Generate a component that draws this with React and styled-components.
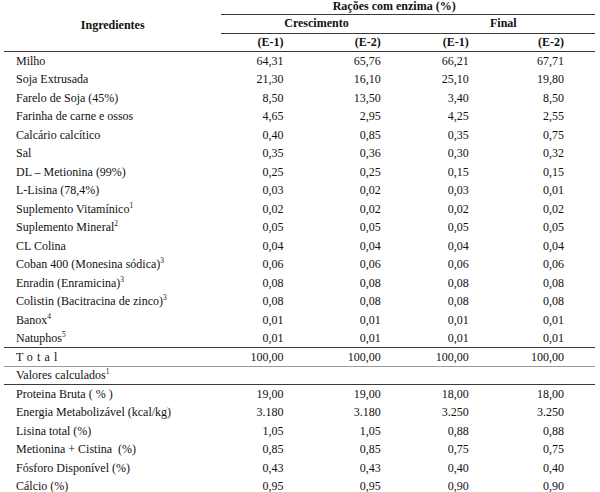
import React from 'react';
import styled, { createGlobalStyle } from 'styled-components';

const GlobalStyle = createGlobalStyle`
  html, body {
    margin: 0;
    padding: 0;
    background: #ffffff;
  }
  body {
    font-family: "Liberation Serif", "Times New Roman", serif;
    color: #111111;
    overflow: hidden;
  }
`;

const ingredients = [
  { name: 'Milho', values: ['64,31', '65,76', '66,21', '67,71'] },
  { name: 'Soja Extrusada', values: ['21,30', '16,10', '25,10', '19,80'] },
  { name: 'Farelo de Soja (45%)', values: ['8,50', '13,50', '3,40', '8,50'] },
  { name: 'Farinha de carne e ossos', values: ['4,65', '2,95', '4,25', '2,55'] },
  { name: 'Calcário calcítico', values: ['0,40', '0,85', '0,35', '0,75'] },
  { name: 'Sal', values: ['0,35', '0,36', '0,30', '0,32'] },
  { name: 'DL – Metionina (99%)', values: ['0,25', '0,25', '0,15', '0,15'] },
  { name: 'L-Lisina (78,4%)', values: ['0,03', '0,02', '0,03', '0,01'] },
  { name: 'Suplemento Vitamínico', note: '1', values: ['0,02', '0,02', '0,02', '0,02'] },
  { name: 'Suplemento Mineral', note: '2', values: ['0,05', '0,05', '0,05', '0,05'] },
  { name: 'CL Colina', values: ['0,04', '0,04', '0,04', '0,04'] },
  { name: 'Coban 400 (Monesina sódica)', note: '3', values: ['0,06', '0,06', '0,06', '0,06'] },
  { name: 'Enradin (Enramicina)', note: '3', values: ['0,08', '0,08', '0,08', '0,08'] },
  { name: 'Colistin (Bacitracina de zinco)', note: '3', values: ['0,08', '0,08', '0,08', '0,08'] },
  { name: 'Banox', note: '4', values: ['0,01', '0,01', '0,01', '0,01'] },
  { name: 'Natuphos', note: '5', values: ['0,01', '0,01', '0,01', '0,01'] },
];

const calculated = [
  { name: 'Proteina Bruta ( % )', values: ['19,00', '19,00', '18,00', '18,00'] },
  { name: 'Energia Metabolizável (kcal/kg)', values: ['3.180', '3.180', '3.250', '3.250'] },
  { name: 'Lisina total (%)', values: ['1,05', '1,05', '0,88', '0,88'] },
  { name: 'Metionina + Cistina \u00a0(%)', values: ['0,85', '0,85', '0,75', '0,75'] },
  { name: 'Fósforo Disponível (%)', values: ['0,43', '0,43', '0,40', '0,40'] },
  { name: 'Cálcio (%)', values: ['0,95', '0,95', '0,90', '0,90'] },
];

const App = () => {
  return (
    <Page>
      <GlobalStyle />
      <Table>
        <colgroup>
          <col style={{ width: 217 }} />
          <col style={{ width: 93 }} />
          <col style={{ width: 97 }} />
          <col style={{ width: 88 }} />
          <col style={{ width: 95 }} />
        </colgroup>
        <thead>
          <HeadRow $first>
            <HeadCell rowSpan={3} $center $rule>Ingredientes</HeadCell>
            <HeadCell colSpan={4} $center $rule $shift>Rações com enzima (%)</HeadCell>
          </HeadRow>
          <HeadRow>
            <HeadCell colSpan={2} $center $rule>Crescimento</HeadCell>
            <HeadCell colSpan={2} $center $rule>Final</HeadCell>
          </HeadRow>
          <HeadRow>
            <HeadCell $rule>(E-1)</HeadCell>
            <HeadCell $rule>(E-2)</HeadCell>
            <HeadCell $rule>(E-1)</HeadCell>
            <HeadCell $rule>(E-2)</HeadCell>
          </HeadRow>
        </thead>
        <tbody>
          {ingredients.map(item => (
            <Row key={item.name}>
              <NameCell>
                {item.name}
                {item.note && <Note>{item.note}</Note>}
              </NameCell>
              {item.values.map((v, i) => (
                <ValueCell key={i}>{v}</ValueCell>
              ))}
            </Row>
          ))}
          <Row $top="dark" $bottom="light">
            <NameCell $spaced>Total</NameCell>
            <ValueCell>100,00</ValueCell>
            <ValueCell>100,00</ValueCell>
            <ValueCell>100,00</ValueCell>
            <ValueCell>100,00</ValueCell>
          </Row>
          <Row $bottom="dark">
            <NameCell>
              Valores calculados<Note>1</Note>
            </NameCell>
            <ValueCell />
            <ValueCell />
            <ValueCell />
            <ValueCell />
          </Row>
          {calculated.map(item => (
            <Row key={item.name}>
              <NameCell>{item.name}</NameCell>
              {item.values.map((v, i) => (
                <ValueCell key={i}>{v}</ValueCell>
              ))}
            </Row>
          ))}
        </tbody>
      </Table>
    </Page>
  );
};

const Page = styled.div`
  width: 600px;
  height: 492px;
  overflow: hidden;
  padding: 0 5px 0 4px;
  box-sizing: border-box;
`;

const Table = styled.table`
  width: 591px;
  margin-top: 0;
  border-collapse: collapse;
  table-layout: fixed;
  font-size: 12px;
`;

const HeadRow = styled.tr`
  height: ${p => (p.$first ? '14.5px' : '18.5px')};

  & > th {
    vertical-align: ${p => (p.$first ? 'top' : 'middle')};
  }
`;

const HeadCell = styled.th`
  padding: 0;
  padding-right: ${p => (p.$shift ? '28px' : p.$center ? '0' : '31px')};
  text-align: ${p => (p.$center ? 'center' : 'right')};
  font-weight: bold;
  line-height: 13px;
  border-bottom: ${p => (p.$rule ? '1.5px solid #3a3a3a' : 'none')};

  &[rowspan] {
    vertical-align: middle;
  }
`;

const Row = styled.tr`
  height: 18.5px;
  border-top: ${p => (p.$top === 'dark' ? '1.5px solid #3a3a3a' : 'none')};
  border-bottom: ${p =>
    p.$bottom === 'dark'
      ? '1.5px solid #3a3a3a'
      : p.$bottom === 'light'
      ? '1px solid #9a9a9a'
      : 'none'};
`;

const NameCell = styled.td`
  padding: 0 0 0 12px;
  text-align: left;
  line-height: 14px;
  white-space: nowrap;
  letter-spacing: ${p => (p.$spaced ? '4.2px' : 'normal')};
`;

const ValueCell = styled.td`
  padding: 0 31px 0 0;
  text-align: right;
  line-height: 14px;
  white-space: nowrap;
`;

const Note = styled.sup`
  font-size: 7.5px;
  line-height: 0;
  vertical-align: 5px;
  letter-spacing: normal;
`;

export default App;
